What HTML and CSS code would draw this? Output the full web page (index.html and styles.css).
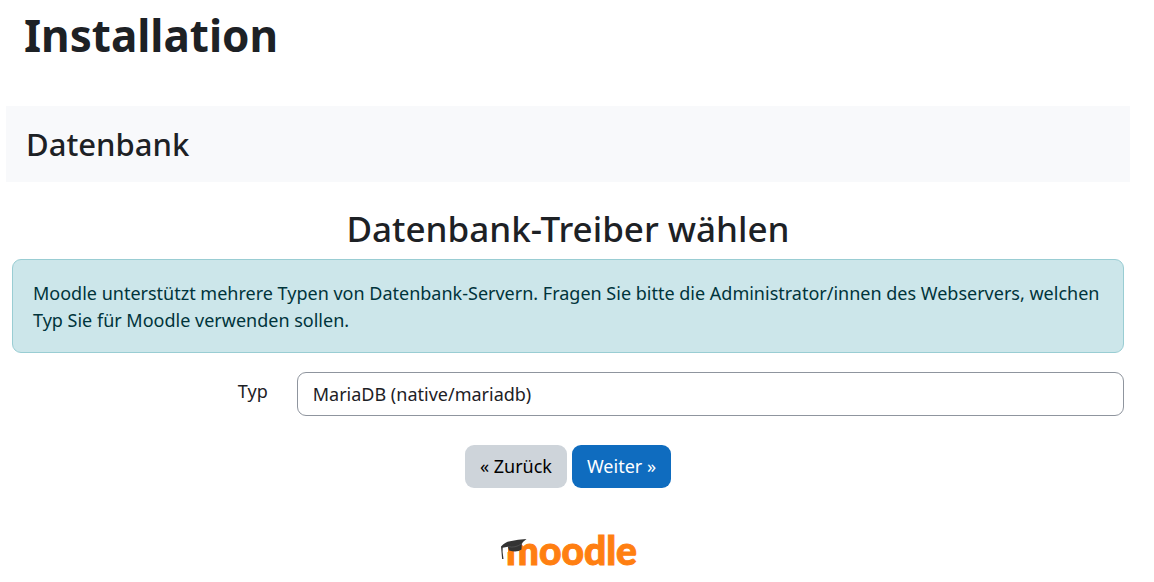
FILE: index.html
```html
<!DOCTYPE html>
<html lang="de">
<head>
<meta charset="utf-8">
<meta name="viewport" content="width=device-width, initial-scale=1">
<title>Installation</title>
<link rel="stylesheet" href="styles.css">
</head>
<body>
<div class="page">
  <header class="page-header"><h1>Installation</h1></header>
  <main>
    <div class="stage"><h2>Datenbank</h2></div>
    <form class="install-form">
      <h3>Datenbank-Treiber wählen</h3>
      <p class="alert">Moodle unterstützt mehrere Typen von Datenbank-Servern. Fragen Sie bitte die Administrator/innen des Webservers, welchen Typ Sie für Moodle verwenden sollen.</p>
      <div class="field">
        <label for="dbtype">Typ</label>
        <select id="dbtype" name="dbtype"><option>MariaDB (native/mariadb)</option></select>
      </div>
      <div class="actions">
        <button class="btn btn-secondary" type="button">« Zurück</button>
        <button class="btn btn-primary" type="submit">Weiter »</button>
      </div>
    </form>
  </main>
  <footer>
    <a class="logo" href="#" aria-label="Moodle">
      <svg width="134" height="37" viewBox="0 0 134 37">
        <text class="wordmark" x="5" y="34">moodle</text>
        <path d="M2 12h5v9H2z" fill="#fff"/>
        <path d="M0 15.500Q4 11 9 10.300Q17 8.200 25.500 8Q22 10.500 20.800 13L20.500 18.500Q16 22 8 19.500L6.800 15.800L1.700 16.800L1.600 21L2.500 28L1.100 28L.5 21Z" fill="#333"/>
        <path d="M7 15.500Q14 17.500 21 12.500" fill="none" stroke="#666" stroke-width=".5"/>
      </svg>
    </a>
  </footer>
</div>
</body>
</html>
```
FILE: styles.css
```css
* { box-sizing: border-box; }
body {
  margin: 0;
  background: #fff;
  color: #1d2125;
  font: 18px/27px "Noto Sans", sans-serif;
}
.page { padding: 0 24px 0 6px; }
h1, h2, h3, p { margin: 0; }
.page-header { padding: 8px 18px 44px; }
h1 { font-size: 44px; line-height: 54px; font-weight: 700; }
.stage { padding: 19px 20px; background: #f8f9fb; }
h2 { font-size: 31px; line-height: 38px; font-weight: 500; }
.install-form { padding: 26px 6px 0; }
h3 {
  margin-bottom: 10px;
  font-size: 35px;
  line-height: 41px;
  font-weight: 500;
  text-align: center;
}
.alert {
  padding: 20px 20px 18px;
  border: 1px solid #99cdd3;
  border-radius: 9px;
  background: #cce6ea;
  color: #00343b;
}
.field {
  display: grid;
  grid-template-columns: 23% 1fr;
  column-gap: 29px;
  margin-top: 19px;
}
.field label { padding-top: 6px; text-align: right; }
.field select {
  width: 100%;
  height: 44px;
  padding: 0 15px;
  border: 1px solid #8f959e;
  border-radius: 9px;
  background: #fff;
  color: #1d2125;
  font: inherit;
  appearance: none;
}
.actions {
  display: flex;
  justify-content: center;
  gap: 5px;
  margin-top: 29px;
}
.btn {
  padding: 8px 15px;
  border: 0;
  border-radius: 9px;
  font: inherit;
}
.btn-secondary { background: #ced4da; color: #000; }
.btn-primary { background: #0f6cbf; color: #fff; }
footer {
  display: flex;
  justify-content: center;
  padding: 43px 0 14px;
}
.logo svg { display: block; overflow: visible; }
.wordmark {
  fill: #ff7f11;
  stroke: #ff7f11;
  stroke-width: 1px;
  font: 900 39px Lato, sans-serif;
}
```
